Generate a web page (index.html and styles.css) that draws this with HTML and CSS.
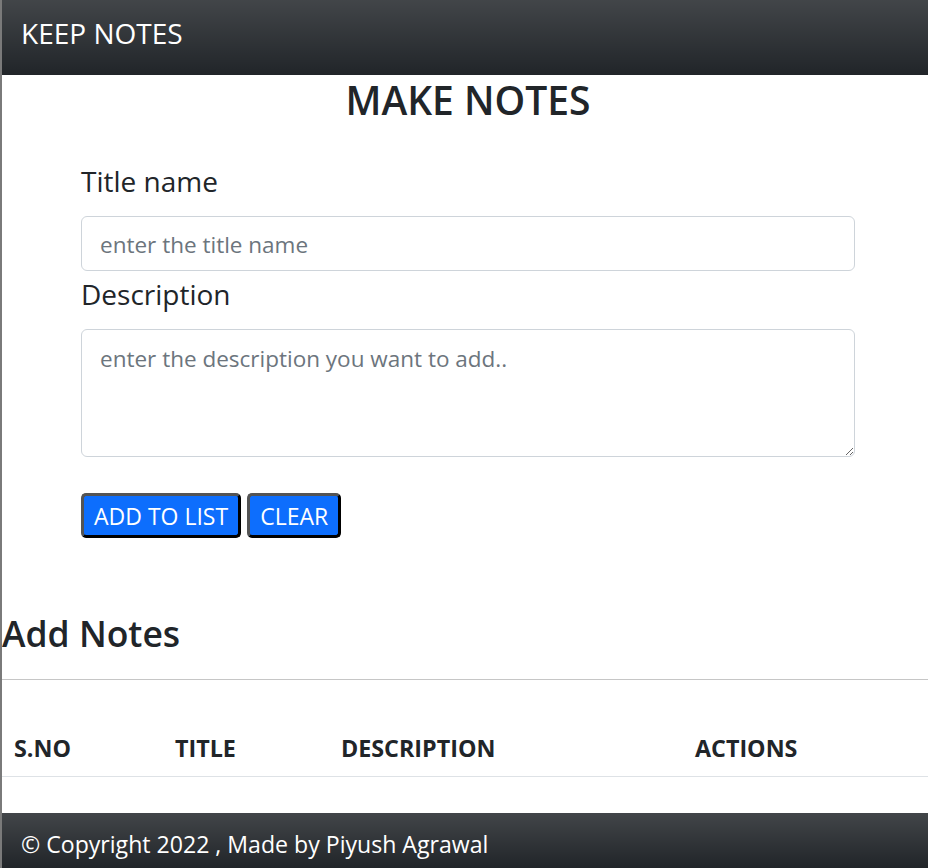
FILE: index.html
```html
<!DOCTYPE html>
<html lang="en">
<head>
<meta charset="utf-8">
<title>Keep Notes</title>
<link rel="stylesheet" href="styles.css">
</head>
<body>
<header class="navbar">
  <span class="brand">KEEP NOTES</span>
</header>
<main class="container">
  <h2 class="page-title">MAKE NOTES</h2>
  <form class="note-form">
    <label class="form-label" for="title">Title name</label>
    <input class="form-control" id="title" type="text" placeholder="enter the title name">
    <label class="form-label form-label-desc" for="desc">Description</label>
    <textarea class="form-control form-area" id="desc" placeholder="enter the description you want to add.."></textarea>
    <div class="actions">
      <button class="btn" type="button">ADD TO LIST</button>
      <button class="btn" type="button">CLEAR</button>
    </div>
  </form>
</main>
<section class="notes">
  <h3 class="notes-title">Add Notes</h3>
  <hr class="divider">
  <table class="notes-table">
    <thead>
      <tr>
        <th class="col-sno">S.NO</th>
        <th class="col-title">TITLE</th>
        <th class="col-desc">DESCRIPTION</th>
        <th class="col-actions">ACTIONS</th>
      </tr>
    </thead>
    <tbody></tbody>
  </table>
</section>
<footer class="footer">
  <span>© Copyright 2022 , Made by Piyush Agrawal</span>
</footer>
</body>
</html>
```
FILE: styles.css
```css
* { box-sizing: border-box; }

html, body { height: 100%; }

body {
  margin: 0;
  border-left: 2px solid #7a7a7a;
  font-family: "Open Sans", "Noto Sans", sans-serif;
  color: #212529;
  background: #fff;
  overflow: hidden;
}

.navbar {
  height: 75px;
  display: flex;
  align-items: flex-start;
  padding: 11px 0 0 19px;
  background: #212529 linear-gradient(180deg, rgba(255,255,255,0.15), rgba(255,255,255,0));
}

.brand {
  color: #fff;
  font-size: 28px;
  line-height: 45px;
}

.container {
  width: 774px;
  margin-left: 79px;
}

.page-title {
  margin: 0;
  font-size: 39px;
  font-weight: 600;
  line-height: 50px;
  text-align: center;
}

.note-form {
  display: flex;
  flex-direction: column;
  padding-top: 34px;
}

.form-label {
  font-size: 28px;
  line-height: 45px;
  margin-bottom: 12px;
}

.form-label-desc { margin-top: 1px; }

.form-control {
  width: 774px;
  height: 55px;
  border: 1px solid #ced4da;
  border-radius: 6px;
  padding: 10px 18px 8px;
  font-family: inherit;
  font-size: 22.5px;
  line-height: 36px;
  color: #212529;
  background: #fff;
}

.form-control::placeholder { color: #6c757d; }

.form-area {
  height: 128px;
  padding-top: 11px;
  resize: vertical;
}

.actions {
  display: flex;
  gap: 6px;
  margin-top: 36px;
}

.btn {
  height: 45px;
  padding: 1px 10px 0;
  border: 3px outset #000;
  border-radius: 5px;
  background: #0d6efd;
  color: #fff;
  font-family: inherit;
  font-size: 23px;
  line-height: 36px;
}

.notes { padding-top: 72px; }

.notes-title {
  margin: 0;
  font-size: 35.5px;
  font-weight: 600;
  line-height: 46px;
}

.divider {
  margin: 23px 0 0;
  border: 0;
  border-top: 1px solid #c6c6c6;
}

.notes-table {
  margin-top: 36px;
  width: 926px;
  border-collapse: collapse;
  table-layout: fixed;
}

.notes-table th {
  text-align: left;
  font-size: 23.3px;
  font-weight: 700;
  line-height: 36px;
  padding: 14px 12px 10px;
  border-bottom: 1px solid #dee2e6;
}

.col-sno { width: 161px; }
.col-title { width: 166px; }
.col-desc { width: 354px; }
.col-actions { width: 245px; }

.footer {
  margin-top: 36px;
  height: 55px;
  padding: 13px 0 0 19px;
  color: #fff;
  font-size: 23.1px;
  line-height: 36px;
  background: #212529 linear-gradient(180deg, rgba(255,255,255,0.15), rgba(255,255,255,0));
  overflow: hidden;
}
```
